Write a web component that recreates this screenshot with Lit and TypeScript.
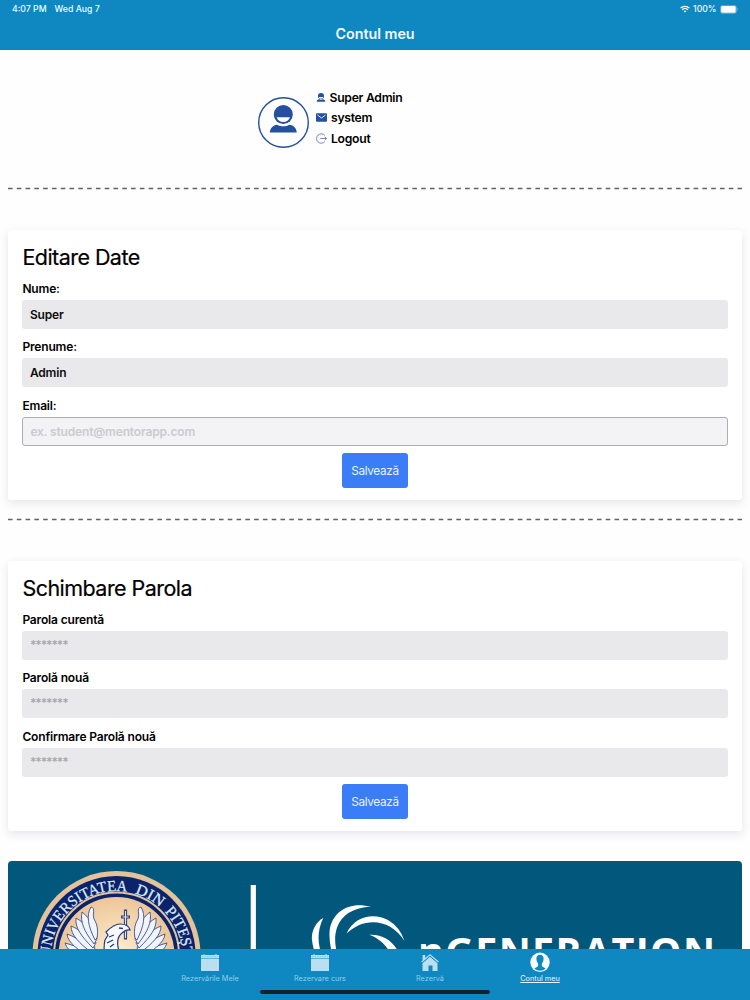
import { LitElement, html, css, svg, nothing } from "lit";
import { customElement, property } from "lit/decorators.js";
import { classMap } from "lit/directives/class-map.js";

interface Field {
  label: string;
  value?: string;
  placeholder?: string;
  outlined?: boolean;
  secret?: boolean;
}

type TabIcon = "calendar" | "home" | "account";

const PROFILE_FIELDS: Field[] = [
  { label: "Nume:", value: "Super" },
  { label: "Prenume:", value: "Admin" },
  { label: "Email:", placeholder: "ex. student@mentorapp.com", outlined: true },
];

const PASSWORD_FIELDS: Field[] = [
  { label: "Parola curentă", placeholder: "*******", secret: true },
  { label: "Parolă nouă", placeholder: "*******", secret: true },
  { label: "Confirmare Parolă nouă", placeholder: "*******", secret: true },
];

const TABS: { icon: TabIcon; label: string; active?: boolean }[] = [
  { icon: "calendar", label: "Rezervările Mele" },
  { icon: "calendar", label: "Rezervare curs" },
  { icon: "home", label: "Rezervă" },
  { icon: "account", label: "Contul meu", active: true },
];

const person = svg`
  <circle cx="14" cy="9.5" r="9.5" />
  <path d="M7.4 12.2h13.2c-.8 3.1-3.5 4.8-6.6 4.8s-5.8-1.7-6.6-4.8z" fill="#fff" />
  <path d="M.5 27.5c.3-4.5 3.2-7.3 7.4-7.8 3.7 2 8.5 2 12.2 0 4.2.5 7.1 3.3 7.4 7.8z" />
`;

@customElement("status-bar")
export class StatusBar extends LitElement {
  static styles = css`
    :host {
      display: flex;
      justify-content: space-between;
      align-items: center;
      height: 18px;
      padding: 0 12px;
      font-size: 8.7px;
      font-weight: 500;
    }

    .group {
      display: flex;
      align-items: center;
    }

    .left {
      gap: 8px;
    }

    .right {
      gap: 3.5px;
    }

    svg {
      display: block;
    }
  `;

  protected render() {
    return html`
      <div class="group left"><span>4:07 PM</span><span>Wed Aug 7</span></div>
      <div class="group right">
        <svg width="10" height="8" viewBox="0 0 11 8" fill="none" stroke="#fff" stroke-width="1.4">
          <path d="M.6 3a7 7 0 0 1 9.8 0M2.4 4.9a4.4 4.4 0 0 1 6.2 0" />
          <path d="M3.9 6.3a2.3 2.3 0 0 1 3.2 0L5.5 7.9z" fill="#fff" stroke="none" />
        </svg>
        <span>100%</span>
        <svg width="18" height="9" viewBox="0 0 18 9">
          <rect x=".4" y=".4" width="16" height="8" rx="2.2" fill="none" stroke="#fff" stroke-opacity=".45" stroke-width=".7" />
          <rect x="1.1" y="1.1" width="14.6" height="6.6" rx="1.3" fill="#fff" />
          <path d="M17 3v2.8c.9-.4.9-2.4 0-2.8z" fill="#fff" opacity=".5" />
        </svg>
      </div>
    `;
  }
}

@customElement("user-summary")
export class UserSummary extends LitElement {
  static styles = css`
    :host {
      display: flex;
      gap: 7px;
      padding: 37px 0 0 258px;
      height: 101px;
    }

    .avatar {
      width: 51px;
      height: 51px;
      margin-top: 9.5px;
    }

    .row {
      display: flex;
      align-items: center;
      gap: 4px;
      height: 20.5px;
      font-size: 12.2px;
      font-weight: 600;
      letter-spacing: -0.28px;
    }

    .row:first-child {
      gap: 3.5px;
    }

    svg {
      display: block;
      fill: #23509f;
    }
  `;

  protected render() {
    return html`
      <div class="avatar">
        <svg width="51" height="51" viewBox="0 0 51 51">
          <circle cx="25.5" cy="25.5" r="24.8" fill="none" stroke="#23509f" stroke-width="1.4" />
          <g transform="translate(11.3 8)">${person}</g>
        </svg>
      </div>
      <div>
        <div class="row">
          <svg width="10" height="9" viewBox="-1 0 30 28">${person}</svg>
          <span>Super Admin</span>
        </div>
        <div class="row">
          <svg width="11" height="9" viewBox="0 0 11 9">
            <rect y=".2" width="11" height="8.5" rx="1" />
            <path d="M1.5 2l4 3 4-3" fill="none" stroke="#fff" stroke-width=".9" />
          </svg>
          <span>system</span>
        </div>
        <div class="row">
          <svg width="11" height="11" viewBox="0 0 11 11">
            <path
              d="M8.9 2.5a4.7 4.7 0 1 0 0 6M4.3 5.5h6.2M8.8 3.9l1.7 1.6-1.7 1.6"
              fill="none"
              stroke="#4a5fa5"
              stroke-width=".75"
            />
          </svg>
          <span>Logout</span>
        </div>
      </div>
    `;
  }
}

@customElement("form-card")
export class FormCard extends LitElement {
  @property() heading = "";
  @property({ attribute: false }) fields: Field[] = [];

  static styles = css`
    :host {
      display: block;
      box-sizing: border-box;
      height: 270px;
      padding: 13px 14.4px 0;
      border-radius: 3px;
      background: #fff;
      box-shadow: 0 3px 10px rgba(60, 50, 90, 0.13);
    }

    h2 {
      margin: 0 0 6.6px;
      font-size: 21.5px;
      font-weight: 400;
      line-height: 28px;
      letter-spacing: -0.54px;
      -webkit-text-stroke: 0.2px #000;
    }

    .field {
      margin-bottom: 7.5px;
    }

    label {
      display: block;
      height: 22px;
      font-size: 12px;
      font-weight: 600;
      line-height: 22.4px;
      letter-spacing: -0.16px;
    }

    input {
      display: block;
      box-sizing: border-box;
      width: 100%;
      height: 29px;
      padding: 0 7.5px;
      border: 0;
      border-radius: 3px;
      background: #e9e9eb;
      color: #0c0c0e;
      font: inherit;
      font-size: 12px;
      font-weight: 600;
      letter-spacing: -0.16px;
    }

    input::placeholder {
      color: #a9a9ad;
    }

    input.secret {
      padding-bottom: 2px;
      letter-spacing: -1.1px;
    }

    input.outlined {
      border: 1px solid #adadb0;
      padding: 0 7px;
      background: #f3f2f4;
    }

    input.outlined::placeholder {
      color: #cbcbce;
    }

    button {
      display: block;
      width: 66px;
      height: 35px;
      margin: 0 auto;
      padding: 0;
      border: 0;
      border-radius: 3px;
      background: #3a7df6;
      color: #e9f2ff;
      font: inherit;
      font-size: 11.8px;
      letter-spacing: -0.35px;
    }
  `;

  protected render() {
    return html`
      <h2>${this.heading}</h2>
      ${this.fields.map(
        (field) => html`
          <div class="field">
            <label>${field.label}</label>
            <input
              class=${classMap({ outlined: !!field.outlined, secret: !!field.secret })}
              .value=${field.value ?? ""}
              placeholder=${field.placeholder ?? nothing}
            />
          </div>
        `,
      )}
      <button>Salvează</button>
    `;
  }
}

// Left wing feathers from the outermost (lowest) to the innermost
const FEATHERS = [
  "M92 962C80 958 68 953 65 943C76 946 86 950 93 957z",
  "M92 958C78 950 68 943 67 934C78 938 88 945 94 953z",
  "M92 953C79 943 71 935 71 926C81 930 90 938 95 948z",
  "M93 948C81 936 75 928 76 918C85 923 92 932 96 943z",
  "M94 944C84 931 80 922 82 912C90 918 95 928 97 939z",
  "M95 940C88 926 86 915 91 907C96 908 92 914 94 919C98 925 98 933 97 938z",
];

@customElement("partner-banner")
export class PartnerBanner extends LitElement {
  static styles = css`
    :host {
      display: block;
      height: 180px;
      border-radius: 4px;
      background: #02577c;
      overflow: hidden;
    }

    svg {
      display: block;
    }

    .seal-text {
      font-family: "Liberation Serif", serif;
      font-size: 15.5px;
      fill: #dcebfa;
      stroke: #dcebfa;
      stroke-width: 0.25px;
    }

    .brand {
      font-family: "Open Sans", sans-serif;
      font-size: 39.5px;
      font-weight: 700;
      fill: #fff;
    }
  `;

  private _wing() {
    return svg`
      <g fill="#f1f4fb" stroke="#3a4f8c" stroke-width=".9" stroke-linejoin="round">
        ${FEATHERS.map((d) => svg`<path d=${d} />`)}
      </g>
    `;
  }

  protected render() {
    return html`
      <svg width="734" height="180" viewBox="8 861 734 180">
        <defs>
          <radialGradient id="parchment">
            <stop offset="0" stop-color="#fff0d2" />
            <stop offset="1" stop-color="#edc69a" />
          </radialGradient>
          <path id="arc" d="M50.5 957A66 66 0 0 1 182.5 957A66 66 0 0 1 176 984" />
        </defs>
        <circle cx="116.5" cy="955" r="84" fill="#e3c39b" />
        <circle cx="116.5" cy="955" r="79" fill="#0b236a" />
        <circle cx="116.5" cy="955" r="62.5" fill="#0b236a" stroke="#e0c3a0" stroke-width="2" />
        <circle cx="116.5" cy="955" r="58" fill="url(#parchment)" />
        <text class="seal-text">
          <textPath href="#arc" textLength="114" lengthAdjust="spacingAndGlyphs">UNIVERSITATEA</textPath>
        </text>
        <text class="seal-text">
          <textPath href="#arc" startOffset="122" textLength="29" lengthAdjust="spacingAndGlyphs">DIN</textPath>
        </text>
        <text class="seal-text">
          <textPath href="#arc" startOffset="157" textLength="54" lengthAdjust="spacingAndGlyphs">PITEȘTI</textPath>
        </text>
        ${this._wing()}
        <g transform="matrix(-1 0 0 1 232 0)">${this._wing()}</g>
        <path d="M125.5 909.5v30M121 917h9" stroke="#33467c" stroke-width="3.2" />
        <path d="M125.5 911v27M122.5 917h6" stroke="#dce4f4" stroke-width="1.1" />
        <path
          d="M104 960c1-8-1-13 1-20l3-5-2-3c4-4 9-8 14-8 5 0 9 2 10 6-4-1-6 1-8 3-4 3-5 8-4 14l3 13z"
          fill="#f6f8fd" stroke="#233a7c" stroke-width="1.2"
        />
        <path d="M109 937l5-2M107 943l6-3M110 947l4-3M119 928l4 .5" stroke="#233a7c" stroke-width="1.3" />
        <rect x="250.7" y="885" width="5.2" height="120" fill="#fff" />
        <g fill="#fff">
          <path d="M323.3 918C315 922 311 933 312 940Q312.5 946 315 953L321 953C317 940 318 929 323.3 918z" />
          <path d="M371 906.8C350 901 333 911 329.8 929Q328.5 940 332 953L337 953C331 931 339 908 371 906.8z" />
          <path d="M346.5 933.5C355 915 375 913 388 920Q400 927 404.500 941C390 918 364 917 346.5 933.5z" />
          <path d="M369.3 934.8C383 934 393 941 399 953L390 953C386 945 380 939 369.3 934.8z" />
        </g>
        <text class="brand" x="418" y="966" textLength="297">nGENERATION</text>
      </svg>
    `;
  }
}

@customElement("tab-bar")
export class TabBar extends LitElement {
  static styles = css`
    :host {
      display: flex;
      flex-direction: column;
      align-items: center;
      height: 51px;
      background: #0f88c1;
    }

    nav {
      display: flex;
      height: 41px;
    }

    .tab {
      display: flex;
      flex-direction: column;
      align-items: center;
      box-sizing: border-box;
      width: 110px;
      padding-top: 3px;
      color: #8fcdea;
      font-size: 7.3px;
      line-height: 12px;
    }

    .tab.active {
      color: #e8f7ff;
      text-decoration: underline;
    }

    svg {
      display: block;
      width: 20px;
      height: 21px;
      fill: #b9dff0;
    }

    .active svg {
      fill: #f6fcff;
    }

    .home-indicator {
      width: 230px;
      height: 4px;
      border-radius: 2px;
      background: #11222c;
    }
  `;

  private _icon(icon: TabIcon) {
    if (icon === "calendar") {
      return svg`<path d="M1 3h2.5V2h1v1h11V2h1v1H19v3H1zM1 6.5h18v12.5H1z" />
        <path d="M2 4.8h16" stroke="#6db9dc" stroke-width=".7" stroke-dasharray="1.5 1" />`;
    }
    if (icon === "home") {
      return svg`<path d="M10 2l8.8 7.6-.8.9-8-7-8 7-.8-.9L2.600 8.400V3h2.600v3.100z" />
        <path d="M10 4.8l7.5 6.5V19h-5v-5.5h-4V19h-6v-7.700z" />`;
    }
    return svg`<circle cx="10" cy="10.3" r="9.7" />
      <path
        d="M10 2.800c-2.500 0-3.700 1.700-3.600 4 .1 2.200.8 3.600 1.700 4.600v2.700c-.5.9-2.100 1.400-3.700 2.400 3.200 3 8 3 11.200 0-1.600-1-3.200-1.500-3.700-2.400v-2.700c.9-1 1.600-2.400 1.700-4.600.1-2.300-1.100-4-3.600-4z"
        fill="#0f88c1"
      />`;
  }

  protected render() {
    return html`
      <nav>
        ${TABS.map(
          (tab) => html`
            <div class=${classMap({ tab: true, active: !!tab.active })}>
              <svg viewBox="0 0 20 21">${this._icon(tab.icon)}</svg>
              <span>${tab.label}</span>
            </div>
          `,
        )}
      </nav>
      <div class="home-indicator"></div>
    `;
  }
}

@customElement("app-root")
export class AppRoot extends LitElement {
  static styles = css`
    :host {
      display: flex;
      flex-direction: column;
      width: 750px;
      height: 1000px;
      overflow: hidden;
      background: #fefefe;
      color: #000;
      font-family: Inter, "Liberation Sans", sans-serif;
    }

    header {
      height: 50px;
      background: #0f88c1;
      color: #f2faff;
    }

    h1 {
      margin: 0;
      font-size: 14.3px;
      font-weight: 600;
      line-height: 32px;
      text-align: center;
    }

    main {
      flex: 1;
      min-height: 0;
      overflow: hidden;
    }

    .divider {
      display: block;
      width: 734px;
      height: 3px;
      margin: -1px 8px 0;
    }

    form-card {
      margin: 40px 8px 19px;
    }

    partner-banner {
      margin: 30px 8px 0;
    }
  `;

  private _divider() {
    return html`
      <svg class="divider" viewBox="0 0 734 3">
        <path d="M0 1.5h734" stroke="#626266" stroke-width="1.4" stroke-dasharray="4.6 4.19" />
      </svg>
    `;
  }

  protected render() {
    return html`
      <header>
        <status-bar></status-bar>
        <h1>Contul meu</h1>
      </header>
      <main>
        <user-summary></user-summary>
        ${this._divider()}
        <form-card heading="Editare Date" .fields=${PROFILE_FIELDS}></form-card>
        ${this._divider()}
        <form-card heading="Schimbare Parola" .fields=${PASSWORD_FIELDS}></form-card>
        <partner-banner></partner-banner>
      </main>
      <tab-bar></tab-bar>
    `;
  }
}

declare global {
  interface HTMLElementTagNameMap {
    "app-root": AppRoot;
    "status-bar": StatusBar;
    "user-summary": UserSummary;
    "form-card": FormCard;
    "partner-banner": PartnerBanner;
    "tab-bar": TabBar;
  }
}
